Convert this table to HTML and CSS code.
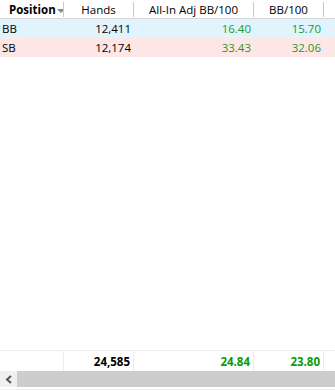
FILE: index.html
```html
<!DOCTYPE html>
<html>
<head>
<meta charset="utf-8">
<link rel="stylesheet" href="styles.css">
</head>
<body>
<div class="grid">
  <div class="row head">
    <div class="cell pos">Position<span class="sort"></span></div>
    <div class="cell c">Hands</div>
    <div class="cell c">All-In Adj BB/100</div>
    <div class="cell c">BB/100</div>
    <div class="cell end"></div>
  </div>
  <div class="row bb">
    <div class="cell l">BB</div>
    <div class="cell r">12,411</div>
    <div class="cell r g">16.40</div>
    <div class="cell r g">15.70</div>
    <div class="cell end"></div>
  </div>
  <div class="row sb">
    <div class="cell l">SB</div>
    <div class="cell r">12,174</div>
    <div class="cell r g">33.43</div>
    <div class="cell r g">32.06</div>
    <div class="cell end"></div>
  </div>
  <div class="spacer"></div>
  <div class="row foot">
    <div class="cell"></div>
    <div class="cell r b">24,585</div>
    <div class="cell r b g2">24.84</div>
    <div class="cell r b g2">23.80</div>
    <div class="cell end"></div>
  </div>
  <div class="hscroll">
    <div class="arrow"><svg width="8" height="9" viewBox="0 0 8 9"><path d="M6 1 L2 4.5 L6 8" fill="none" stroke="#555" stroke-width="2"/></svg></div>
    <div class="thumb"></div>
  </div>
  <div class="bottom"></div>
</div>
</body>
</html>
```

FILE: styles.css
```css
html, body {
  margin: 0;
  padding: 0;
  background: #fff;
}
body {
  width: 335px;
  height: 390px;
  overflow: hidden;
  font-family: "Open Sans", "Noto Sans", sans-serif;
  font-size: 11.5px;
  color: #000;
}
.grid {
  display: flex;
  flex-direction: column;
  height: 390px;
}
.row {
  display: grid;
  grid-template-columns: 64px 70px 120px 70px 11px;
  height: 19px;
  align-items: stretch;
}
.cell {
  display: flex;
  align-items: center;
  padding: 0 3px;
  overflow: hidden;
  white-space: nowrap;
}
.head {
  border-bottom: 1px solid #d6d6d6;
  height: 18px;
}
.head .cell {
  border-right: 1px solid #c8c8c8;
  margin: 2px 0 1px;
  justify-content: center;
}
.head .cell.end { border-right: none; }
.head .pos {
  font-weight: bold;
  justify-content: flex-start;
  padding-left: 9px;
}
.sort {
  display: inline-block;
  width: 0;
  height: 0;
  border-left: 4px solid transparent;
  border-right: 4px solid transparent;
  border-top: 4px solid #888;
  margin-left: 1px;
  margin-top: 2px;
}
.l { justify-content: flex-start; padding-left: 2px; }
.r { justify-content: flex-end; }
.g { color: #1f9a1f; }
.g2 { color: #0a9a0a; }
.b { font-weight: bold; }
.bb { background: #e1f3fc; }
.sb { background: #fde6e6; }
.spacer { flex: 1; }
.foot {
  border-top: 1px solid #ececec;
  height: 20px;
}
.foot .cell { border-right: 1px solid #ececec; }
.foot .cell.end { border-right: none; }
.hscroll {
  display: flex;
  height: 16px;
  background: #f0f0f0;
}
.arrow {
  width: 17px;
  display: flex;
  align-items: center;
  justify-content: center;
}
.thumb {
  flex: 1;
  background: #cdcdcd;
}
.bottom {
  height: 2px;
  background: #fff;
  border-bottom: 1px solid #f0f0f0;
}
```
